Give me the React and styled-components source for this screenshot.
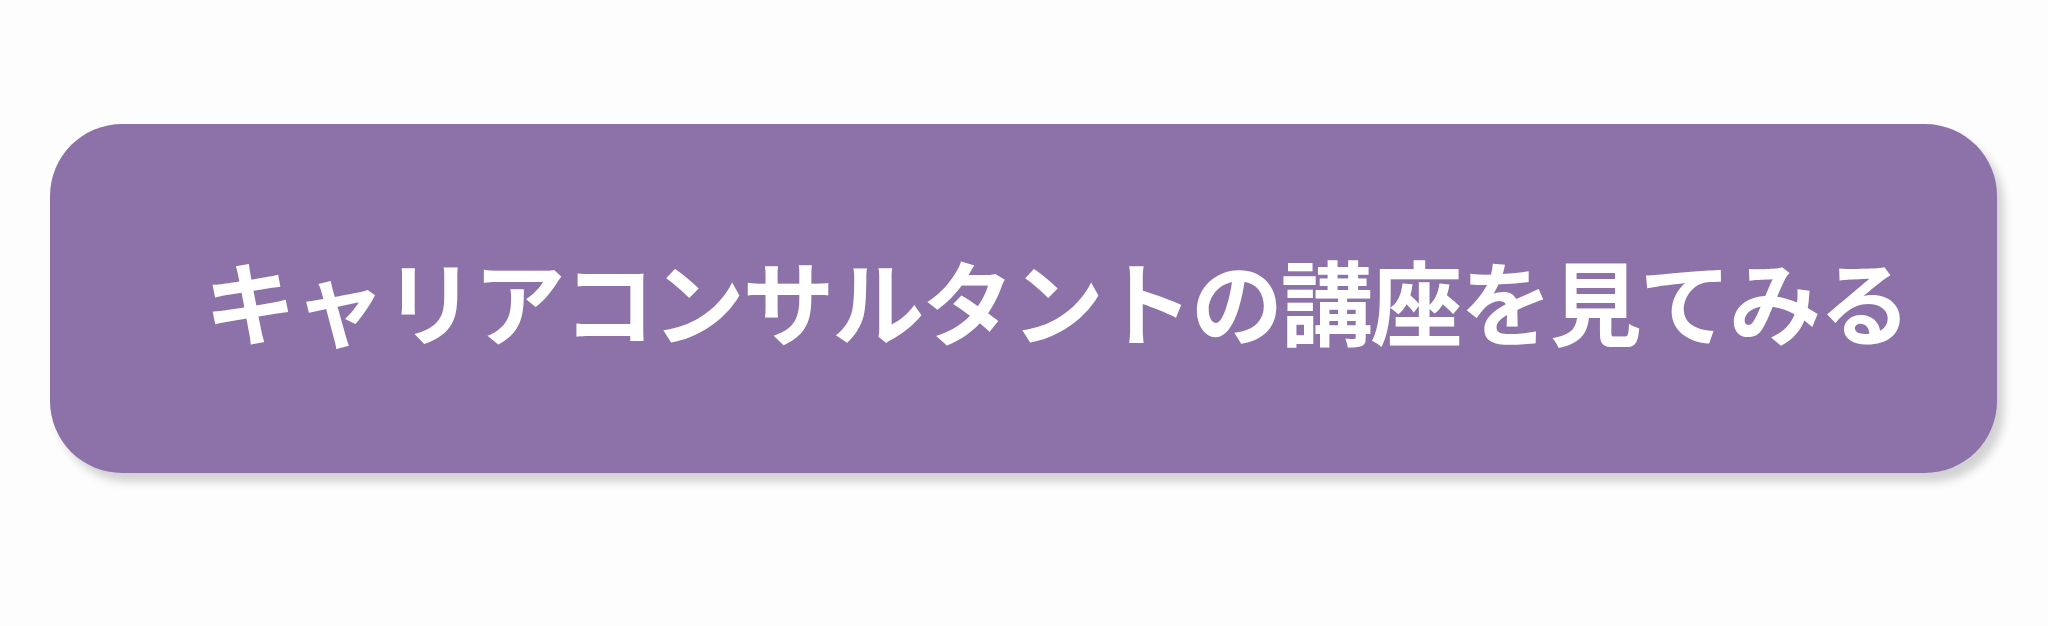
import React from "react";
import styled, { createGlobalStyle } from "styled-components";

const GlobalStyle = createGlobalStyle`
  html, body {
    margin: 0;
    padding: 0;
    background: #fdfdfd;
  }
`;

const Page = styled.div`
  width: 2048px;
  height: 626px;
  box-sizing: border-box;
  padding: 124px 51px 0 50px;
`;

const CtaButton = styled.a`
  display: flex;
  align-items: center;
  justify-content: center;
  box-sizing: border-box;
  width: 100%;
  height: 349px;
  padding-left: 66px;
  border-radius: 72px;
  background: #8c72a8;
  box-shadow: 7px 9px 8px rgba(60, 60, 70, 0.22);
  color: #ffffff;
  font-family: "Noto Sans CJK JP", "Noto Sans", sans-serif;
  font-weight: 700;
  font-size: 92px;
  letter-spacing: -2.3px;
  text-decoration: none;
  cursor: pointer;
`;

const App = () => {
  return (
    <>
      <GlobalStyle />
      <Page>
        <CtaButton>キャリアコンサルタントの講座を見てみる</CtaButton>
      </Page>
    </>
  );
};

export default App;
